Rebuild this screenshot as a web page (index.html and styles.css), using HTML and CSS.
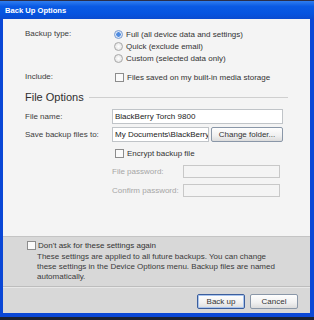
FILE: index.html
```html
<!DOCTYPE html>
<html lang="en">
<head>
<meta charset="UTF-8" />
<title>Back Up Options</title>
<link rel="stylesheet" href="styles.css">
</head>
<body>

<div class="window">
  <!-- Title bar -->
  <div class="titlebar">Back Up Options</div>

  <div class="content">
    <div class="row">
      <div class="label">Backup type:</div>
      <div class="options">
        <div class="opt"><span class="radio checked"></span>Full (all device data and settings)</div>
        <div class="opt"><span class="radio"></span>Quick (exclude email)</div>
        <div class="opt"><span class="radio"></span>Custom (selected data only)</div>
      </div>
    </div>

    <div class="row include">
      <div class="label">Include:</div>
      <div class="opt"><span class="check"></span>Files saved on my built-in media storage</div>
    </div>

    <div class="section">
      <span class="section-title">File Options</span>
      <span class="section-line"></span>
    </div>

    <div class="row field first">
      <div class="label">File name:</div>
      <div class="input wide">BlackBerry Torch 9800</div>
    </div>

    <div class="row field">
      <div class="label">Save backup files to:</div>
      <div class="folder">
        <div class="input path">My Documents\BlackBerry\Backup</div>
        <div class="btn">Change folder...</div>
      </div>
    </div>

    <div class="row encrypt">
      <div class="label"></div>
      <div class="opt"><span class="check"></span>Encrypt backup file</div>
    </div>

    <div class="row pw">
      <div class="label"></div>
      <div class="pw-row">
        <span class="pw-label">File password:</span>
        <span class="input disabled"></span>
      </div>
    </div>
    <div class="row pw">
      <div class="label"></div>
      <div class="pw-row">
        <span class="pw-label">Confirm password:</span>
        <span class="input disabled"></span>
      </div>
    </div>
  </div>

  <div class="footer">
    <div class="opt dont-ask"><span class="check"></span>Don't ask for these settings again</div>
    <p class="note">These settings are applied to all future backups. You can change these settings in the Device Options menu. Backup files are named automatically.</p>
    <div class="separator"></div>
    <div class="buttons">
      <div class="btn default">Back up</div>
      <div class="btn">Cancel</div>
    </div>
  </div>
</div>

</body>
</html>
```

FILE: styles.css
```css
body {
  margin: 0;
  background: #1c2230;
  font-family: 'Liberation Sans', Arial, sans-serif;
  font-size: 8px;
  color: #333;
}
.window {
  width: 314px;
  height: 317px;
  box-sizing: border-box;
  background: #0a47d6;
  padding: 0 4px 4px 3px;
  display: flex;
  flex-direction: column;
}
.titlebar {
  height: 19px;
  margin: 0 -4px 0 -3px;
  padding-left: 5px;
  line-height: 19px;
  border-top: 1px solid #2b2f4a;
  box-sizing: border-box;
  background: linear-gradient(#2f7df0, #0a5ae4 30%, #0654e0 70%, #0a4bd0);
  color: white;
  font-weight: 700;
  font-size: 7.6px;
}
.content {
  background: #f4f4f4;
  height: 217px;
  box-sizing: border-box;
  padding: 9px 27px 0 22px;
}
.row {
  display: flex;
}
.label {
  width: 87px;
  flex-shrink: 0;
  line-height: 12px;
  color: #3c3c3c;
}
.opt {
  display: flex;
  align-items: center;
  height: 12px;
  white-space: nowrap;
}
.options .opt {
  padding-left: 2px;
}
.radio {
  width: 7px;
  height: 7px;
  border-radius: 50%;
  border: 1px solid #a8a8a8;
  background: radial-gradient(#ffffff, #dcdcdc);
  margin-right: 3px;
  box-sizing: content-box;
  position: relative;
}
.radio.checked {
  border-color: #7a9cd0;
  background: radial-gradient(#4f8be0 0 2px, #dbe6f6 2.5px);
}
.check {
  width: 7px;
  height: 7px;
  border: 1px solid #8c8c8c;
  background: #fafafa;
  margin-right: 3px;
}
.include {
  margin-top: 7px;
}
.include .opt {
  padding-left: 3px;
}
.section {
  display: flex;
  align-items: center;
  margin-top: 6px;
  height: 16px;
}
.section-title {
  font-size: 11px;
  color: #2e2e2e;
  margin-right: 5px;
}
.section-line {
  flex: 1;
  height: 1px;
  background: #cfcfcf;
  margin-right: -5px;
}
.field {
  align-items: center;
  margin-top: 3px;
}
.field.first {
  margin-top: 4px;
}
.input {
  height: 15px;
  box-sizing: border-box;
  border: 1px solid #c0c4c8;
  background: white;
  line-height: 13px;
  padding-left: 2px;
  color: #222;
  white-space: nowrap;
  overflow: hidden;
}
.wide {
  flex: 1;
}
.folder {
  flex: 1;
  display: flex;
  gap: 2px;
}
.path {
  width: 97px;
}
.btn {
  height: 15px;
  box-sizing: border-box;
  border: 1px solid #8a97a8;
  border-radius: 2px;
  background: linear-gradient(#fefefe, #f0f0f0 60%, #dcdcdc);
  text-align: center;
  line-height: 13px;
  color: #333;
}
.folder .btn {
  flex: 1;
}
.encrypt {
  margin-top: 5px;
}
.encrypt .opt {
  padding-left: 3px;
}
.pw {
  margin-top: 6px;
}
.pw-row {
  display: flex;
  align-items: center;
}
.pw-label {
  width: 71px;
  color: #a6a6a6;
}
.input.disabled {
  width: 97px;
  height: 13px;
  background: #f4f4f4;
  border-color: #c8c8c8;
}
.footer {
  flex: 1;
  background: #d8d8d8;
  border-top: 1px solid #c4c4c4;
  padding: 2px 12px 0 24px;
  display: flex;
  flex-direction: column;
}
.dont-ask .check {
  margin-right: 2px;
}
.note {
  margin: 1px 0 0 10px;
  line-height: 10px;
  width: 240px;
  color: #3a3a3a;
}
.separator {
  height: 1px;
  background: #bdbdbd;
  border-bottom: 1px solid #e8e8e8;
  margin: 4px -12px 0 -24px;
}
.buttons {
  display: flex;
  justify-content: flex-end;
  gap: 5px;
  margin-top: 6px;
}
.buttons .btn {
  width: 48px;
}
.btn.default {
  border-color: #3c5e9c;
  box-shadow: inset 0 0 0 1px #a8c4ee;
}
```
